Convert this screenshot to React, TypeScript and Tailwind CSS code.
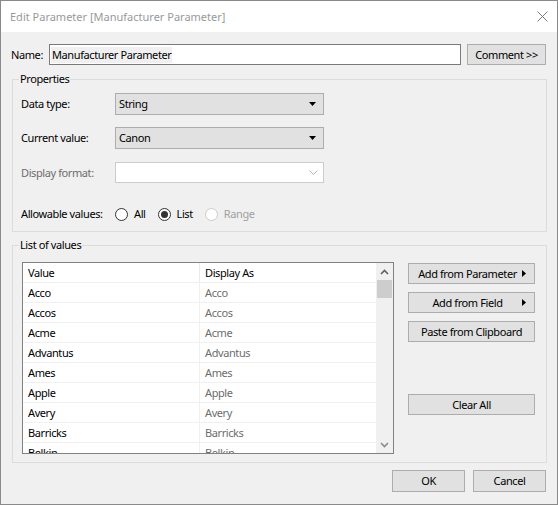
import React from 'react';

const font = { fontFamily: '"Noto Sans", "Open Sans", Arial, sans-serif' };

const rows = ['Acco', 'Accos', 'Acme', 'Advantus', 'Ames', 'Apple', 'Avery', 'Barricks', 'Belkin'];

// 小さい黒三角 (ドロップダウン)
const DownTriangle = () => (
  <svg width="8" height="5" viewBox="0 0 8 5" className="shrink-0">
    <path d="M0 0 H7 L3.5 4 Z" fill="#000" />
  </svg>
);

const RightTriangle = () => (
  <svg width="5" height="8" viewBox="0 0 5 8" className="shrink-0">
    <path d="M0 0 V7 L4 3.5 Z" fill="#000" />
  </svg>
);

const Select: React.FC<{ value: string; h: string }> = ({ value, h }) => (
  <div className={`flex w-[209px] ${h} items-center justify-between border border-[#adadad] bg-[#e1e1e1] pl-[3px] pr-[6px]`}>
    <span>{value}</span>
    <DownTriangle />
  </div>
);

const Radio: React.FC<{ label: string; checked?: boolean; disabled?: boolean }> = ({ label, checked, disabled }) => (
  <div className="flex items-center">
    <div
      className={`flex h-[13px] w-[13px] items-center justify-center rounded-full border bg-white ${
        disabled ? 'border-[#cccccc]' : 'border-[#333333]'
      }`}
    >
      {checked && <div className="h-[7px] w-[7px] rounded-full bg-[#333333]" />}
    </div>
    <span className={`ml-[6px] ${disabled ? 'text-[#a0a0a0]' : ''}`}>{label}</span>
  </div>
);

const Btn: React.FC<{ children: React.ReactNode; className?: string }> = ({ children, className = '' }) => (
  <div className={`flex h-[21px] items-center border border-[#adadad] bg-[#e1e1e1] ${className}`}>{children}</div>
);

export default function App() {
  return (
    <div
      style={font}
      className="flex h-[505px] w-[558px] flex-col overflow-hidden whitespace-nowrap border border-[#8a8a8a] bg-[#f0f0f0] text-[11px] leading-[16px] tracking-[-0.4px] text-black"
    >
      {/* タイトルバー */}
      <div className="flex h-[31px] shrink-0 items-center justify-between bg-white pl-[9px] pr-[9px]">
        <span className="text-[11px] tracking-normal text-[#999999]">Edit Parameter [Manufacturer Parameter]</span>
        <svg width="11" height="11" viewBox="0 0 11 11">
          <path d="M0.5 0.5 L10.5 10.5 M10.5 0.5 L0.5 10.5" stroke="#7a7a7a" strokeWidth="1" />
        </svg>
      </div>

      <div className="flex flex-1 flex-col pl-[10px] pr-[10px] pt-[12px]">
        {/* Name */}
        <div className="flex h-[21px] items-center">
          <span className="w-[38px]">Name:</span>
          <div className="flex h-[21px] w-[412px] items-center border border-[#7a7a7a] bg-white px-[1px]">
            <span className="bg-[#f0f0f0] pl-[1px] pr-[1px]">Manufacturer Parameter</span>
          </div>
          <Btn className="ml-[6px] w-[79px] justify-center">Comment &gt;&gt;</Btn>
        </div>

        {/* Properties */}
        <fieldset className="ml-[1px] mt-[6px] border border-[#dcdcdc] pb-[7px] pl-[8px] pr-[8px]">
          <legend className="-ml-[2px] px-[1px] leading-[16px]">Properties</legend>
          <div className="mt-[6px] flex h-[22px] items-center">
            <span className="w-[94px]">Data type:</span>
            <Select value="String" h="h-[22px]" />
          </div>
          <div className="mt-[12px] flex h-[22px] items-center">
            <span className="w-[94px]">Current value:</span>
            <Select value="Canon" h="h-[22px]" />
          </div>
          <div className="mt-[13px] flex h-[21px] items-center">
            <span className="w-[94px] text-[#6d6d6d]">Display format:</span>
            <div className="flex h-[21px] w-[209px] items-center justify-end border border-[#cccccc] bg-white pr-[5px]">
              <svg width="9" height="5" viewBox="0 0 9 5">
                <path d="M0.5 0.5 L4.5 4.5 L8.5 0.5" stroke="#b5b5b5" fill="none" />
              </svg>
            </div>
          </div>
          <div className="mt-[21px] flex h-[20px] items-center">
            <span className="w-[94px]">Allowable values:</span>
            <div className="flex items-center gap-[12px]">
              <Radio label="All" />
              <Radio label="List" checked />
              <Radio label="Range" disabled />
            </div>
          </div>
        </fieldset>

        {/* List of values */}
        <fieldset className="ml-[1px] mt-[5px] border border-[#dcdcdc] pb-[8px] pl-[9px] pr-[11px]">
          <legend className="-ml-[3px] px-[1px] leading-[16px]">List of values</legend>
          <div className="mt-[9px] flex">
            <div className="flex h-[192px] w-[372px] overflow-hidden border border-[#828282] bg-white">
              <div className="flex-1 overflow-hidden">
                <div className="flex h-[20px] border-b border-[#f0f0f0]">
                  <div className="w-[177px] border-r border-[#ebebeb] pl-[5px] pt-[2px]">Value</div>
                  <div className="flex-1 pl-[5px] pt-[2px]">Display As</div>
                </div>
                {rows.map((r) => (
                  <div key={r} className="flex h-[20px] shrink-0 border-b border-[#f0f0f0]">
                    <div className="w-[177px] border-r border-[#f0f0f0] pl-[5px] pt-[2px]">{r}</div>
                    <div className="flex-1 pl-[5px] pt-[2px] text-[#6d6d6d]">{r}</div>
                  </div>
                ))}
              </div>
              {/* スクロールバー */}
              <div className="flex w-[17px] flex-col items-center bg-[#f0f0f0]">
                <div className="flex h-[17px] w-full items-center justify-center">
                  <svg width="9" height="6" viewBox="0 0 9 6">
                    <path d="M1 5 L4.5 1.5 L8 5" stroke="#606060" strokeWidth="1.6" fill="none" />
                  </svg>
                </div>
                <div className="h-[18px] w-[15px] bg-[#cdcdcd]" />
                <div className="flex-1" />
                <div className="flex h-[17px] w-full items-center justify-center">
                  <svg width="9" height="6" viewBox="0 0 9 6">
                    <path d="M1 1 L4.5 4.5 L8 1" stroke="#8a8a8a" strokeWidth="1.6" fill="none" />
                  </svg>
                </div>
              </div>
            </div>

            <div className="ml-[14px] flex w-[127px] flex-col pt-[1px]">
              <Btn className="pr-[7px]">
                <span className="flex-1 pl-[4px] text-center">Add from Parameter</span>
                <RightTriangle />
              </Btn>
              <Btn className="mt-[8px] pr-[7px]">
                <span className="flex-1 pl-[4px] text-center">Add from Field</span>
                <RightTriangle />
              </Btn>
              <Btn className="mt-[8px] justify-center">Paste from Clipboard</Btn>
              <Btn className="mt-[52px] justify-center">Clear All</Btn>
            </div>
          </div>
        </fieldset>

        {/* OK / Cancel */}
        <div className="mt-[7px] flex justify-end gap-[8px] pr-[1px]">
          <Btn className="h-[22px] w-[73px] justify-center">OK</Btn>
          <Btn className="h-[22px] w-[73px] justify-center">Cancel</Btn>
        </div>
      </div>
    </div>
  );
}
